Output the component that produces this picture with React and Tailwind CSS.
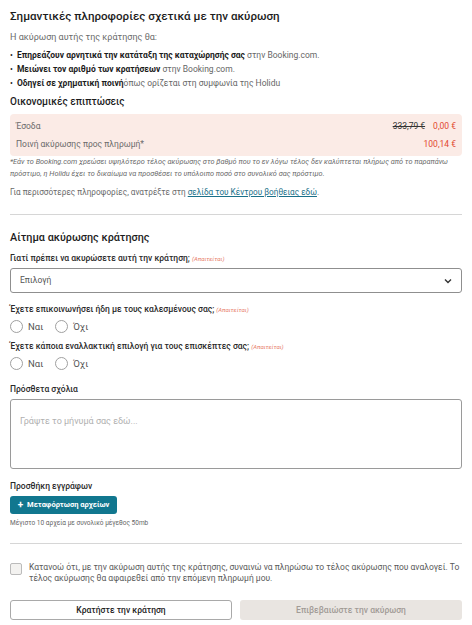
import React from "react";

function Radio({ label }) {
  return (
    <label className="flex items-center gap-[5px]">
      <span className="w-[13px] h-[13px] rounded-full border border-[#a0a0a0] bg-white"></span>
      <span className="text-[9.5px] leading-[13px] text-[#555]">{label}</span>
    </label>
  );
}

const Req = () => <span className="italic font-normal text-[6px] text-[#e8806c]">(Απαιτείται)</span>;

export default function App() {
  return (
    <div className="w-[472px] h-[625px] bg-white text-[#222] px-[10px] pt-[9px] overflow-hidden" style={{ fontFamily: 'Roboto, "Noto Sans", sans-serif' }}>
      <h1 className="text-[11.6px] font-medium leading-[14px] text-[#1c1c1c]">Σημαντικές πληροφορίες σχετικά με την ακύρωση</h1>
      <p className="mt-[8px] text-[9px] leading-[12px] text-[#6a6a6a]">Η ακύρωση αυτής της κράτησης θα:</p>
      <ul className="mt-[6px] flex flex-col gap-[2px] text-[8.5px] leading-[12px]">
        <li className="flex gap-[4px]"><span className="text-[#1c1c1c]">•</span><span><b className="font-bold text-[#1c1c1c]">Επηρεάζουν αρνητικά την κατάταξη της καταχώρησής σας</b> <span className="text-[#666]">στην Booking.com.</span></span></li>
        <li className="flex gap-[4px]"><span className="text-[#1c1c1c]">•</span><span><b className="font-bold text-[#1c1c1c]">Μειώνει τον αριθμό των κρατήσεων</b> <span className="text-[#666]">στην Booking.com.</span></span></li>
        <li className="flex gap-[4px]"><span className="text-[#1c1c1c]">•</span><span><b className="font-bold text-[#1c1c1c]">Οδηγεί σε χρηματική ποινή</b><span className="text-[#666]">όπως ορίζεται στη συμφωνία της Holidu</span></span></li>
      </ul>
      <h2 className="mt-[6px] text-[10px] font-medium leading-[14px] text-[#1c1c1c]">Οικονομικές επιπτώσεις</h2>
      <div className="mt-[5px] rounded-[4px] bg-[#fbebe6] px-[6px] py-[4px] text-[8.5px] text-[#6a6a6a]">
        <div className="flex justify-between items-center h-[16px]">
          <span>Έσοδα</span>
          <span className="flex gap-[8px]"><span className="line-through text-[#333]">333,79 €</span><span className="text-[#e2482f]">0,00 €</span></span>
        </div>
        <div className="flex justify-between items-center h-[16px] mt-[2px]">
          <span>Ποινή ακύρωσης προς πληρωμή*</span>
          <span className="text-[#e2482f]">100,14 €</span>
        </div>
      </div>
      <p className="mt-0 text-[7.3px] italic leading-[12px] text-[#6a6a6a] whitespace-nowrap">*Εάν το Booking.com χρεώσει υψηλότερο τέλος ακύρωσης στο βαθμό που το εν λόγω τέλος δεν καλύπτεται πλήρως από το παραπάνω<br />πρόστιμο, η Holidu έχει το δικαίωμα να προσθέσει το υπόλοιπο ποσό στο συνολικό σας πρόστιμο.</p>
      <p className="mt-[6px] text-[8.2px] leading-[12px] text-[#6a6a6a]">Για περισσότερες πληροφορίες, ανατρέξτε στη <a className="underline text-[#1a7089]">σελίδα του Κέντρου βοήθειας εδώ</a>.</p>
      <div className="mt-[16px] border-t border-[#d6d6d6]"></div>
      <h2 className="mt-[16px] text-[10.8px] font-medium leading-[14px] text-[#1c1c1c]">Αίτημα ακύρωσης κράτησης</h2>
      <p className="mt-[7px] text-[8.5px] font-medium leading-[12px] text-[#2a2a2a]">Γιατί πρέπει να ακυρώσετε αυτή την κράτηση; <Req /></p>
      <div className="mt-[3px] h-[25px] rounded-[3px] border border-[#8f8f8f] flex items-center justify-between px-[9px]">
        <span className="text-[8.5px] text-[#555]">Επιλογή</span>
        <svg width="8" height="6" viewBox="0 0 8 6"><path d="M1 1.5 L4 4.5 L7 1.5" stroke="#333" strokeWidth="1.4" fill="none" /></svg>
      </div>
      <p className="mt-[10px] text-[8.5px] font-medium leading-[12px] text-[#2a2a2a]">Έχετε επικοινωνήσει ήδη με τους καλεσμένους σας; <Req /></p>
      <div className="mt-[4px] flex gap-[12px]"><Radio label="Ναι" /><Radio label="Όχι" /></div>
      <p className="mt-[7px] text-[8.5px] font-medium leading-[12px] text-[#2a2a2a]">Έχετε κάποια εναλλακτική επιλογή για τους επισκέπτες σας; <Req /></p>
      <div className="mt-[4px] flex gap-[12px]"><Radio label="Ναι" /><Radio label="Όχι" /></div>
      <p className="mt-[13px] text-[8.5px] font-medium leading-[12px] text-[#2a2a2a]">Πρόσθετα σχόλια</p>
      <div className="mt-[4px] h-[70px] rounded-[3px] border border-[#9a9a9a] px-[9px] py-[7px]">
        <span className="text-[9px] text-[#b0b0b0]">Γράψτε το μήνυμά σας εδώ...</span>
      </div>
      <p className="mt-[11px] text-[8.5px] font-medium leading-[12px] text-[#2a2a2a]">Προσθήκη εγγράφων</p>
      <button className="mt-[4px] h-[18px] w-[107px] rounded-[3px] bg-[#11778f] text-white text-[7.5px] font-bold flex items-center justify-center gap-[4px]">
        <span className="text-[10px] leading-none font-bold">+</span>Μεταφόρτωση αρχείων
      </button>
      <p className="mt-[5px] text-[6.5px] leading-[8px] text-[#666]">Μέγιστο 10 αρχεία με συνολικό μέγεθος 50mb</p>
      <div className="mt-[16px] border-t border-[#d6d6d6]"></div>
      <div className="mt-[18px] flex gap-[7px]">
        <span className="mt-[1px] shrink-0 w-[12px] h-[12px] rounded-[2px] border border-[#bbb] bg-[#f3f2f0]"></span>
        <p className="text-[8.5px] leading-[11px] text-[#5a5a5a] whitespace-nowrap">Κατανοώ ότι, με την ακύρωση αυτής της κράτησης, συναινώ να πληρώσω το τέλος ακύρωσης που αναλογεί. Το<br />τέλος ακύρωσης θα αφαιρεθεί από την επόμενη πληρωμή μου.</p>
      </div>
      <div className="mt-[16px] grid grid-cols-2 gap-[8px]">
        <button className="h-[20px] rounded-[3px] border border-[#a9a9a9] text-[8.5px] font-medium text-[#222]">Κρατήστε την κράτηση</button>
        <button className="h-[20px] rounded-[3px] bg-[#e9e5e1] text-[8.5px] font-medium text-[#a19b96]">Επιβεβαιώστε την ακύρωση</button>
      </div>
    </div>
  );
}
